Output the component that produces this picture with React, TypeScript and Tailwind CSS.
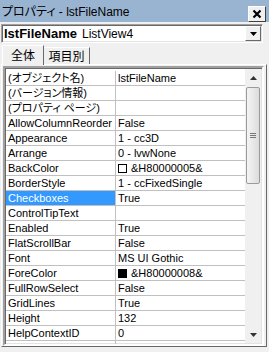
import React from "react";

type Row = { n: string; v: string; sw?: "w" | "b"; sel?: boolean };

const rows: Row[] = [
  { n: "(オブジェクト名)", v: "lstFileName" },
  { n: "(バージョン情報)", v: "" },
  { n: "(プロパティ ページ)", v: "" },
  { n: "AllowColumnReorder", v: "False" },
  { n: "Appearance", v: "1 - cc3D" },
  { n: "Arrange", v: "0 - lvwNone" },
  { n: "BackColor", v: "&H80000005&", sw: "w" },
  { n: "BorderStyle", v: "1 - ccFixedSingle" },
  { n: "Checkboxes", v: "True", sel: true },
  { n: "ControlTipText", v: "" },
  { n: "Enabled", v: "True" },
  { n: "FlatScrollBar", v: "False" },
  { n: "Font", v: "MS UI Gothic" },
  { n: "ForeColor", v: "&H80000008&", sw: "b" },
  { n: "FullRowSelect", v: "False" },
  { n: "GridLines", v: "True" },
  { n: "Height", v: "132" },
  { n: "HelpContextID", v: "0" },
  { n: "HideColumnHeaders", v: "False" },
];

export default function App() {
  return (
    <div className="w-[269px] h-[352px] bg-[#f0f0f0] overflow-hidden text-black text-[11px] leading-none font-['Liberation_Sans','Noto_Sans_CJK_JP',sans-serif] [font-feature-settings:'palt']">
      {/* title bar */}
      <div className="h-[22px] bg-[#99b4d1] flex items-center pl-[2px]">
        <span className="text-[12px] mt-[1px]">プロパティ - lstFileName</span>
        <div className="ml-auto mr-[3px] mt-[6px] w-[18px] h-[16px] bg-[#f0f0f0] border border-t-white border-l-white border-r-[#404040] border-b-[#404040] flex items-center justify-center">
          <svg width="10" height="10" viewBox="0 0 10 10">
            <path d="M1.5 1.5L8.5 8.5M8.5 1.5L1.5 8.5" stroke="black" strokeWidth="2.2" />
          </svg>
        </div>
      </div>

      {/* combo */}
      <div className="mt-[2px] ml-[1px] w-[262px] h-[19px] bg-white border border-t-[#a0a0a0] border-l-[#a0a0a0] border-r-white border-b-white shadow-[inset_1px_1px_0_#696969,inset_-1px_-1px_0_#e3e3e3] flex items-center pl-[2px] pr-[1px]">
        <span className="text-[13px] font-bold">lstFileName</span>
        <span className="text-[12px] ml-[5px]">ListView4</span>
        <div className="ml-auto w-[16px] h-[15px] bg-[#f0f0f0] border border-t-white border-l-white border-r-[#696969] border-b-[#696969] flex items-center justify-center">
          <svg width="7" height="5" viewBox="0 0 7 5" className="mt-[2px]">
            <path d="M0 0H7L3.5 4Z" fill="black" />
          </svg>
        </div>
      </div>

      {/* tabs */}
      <div className="mt-[2px] h-[19px] flex items-start relative z-10">
        <div className="ml-[2px] w-[42px] h-[20px] bg-[#f0f0f0] border-t border-l border-t-white border-l-white border-r border-r-[#696969] flex items-start justify-center pt-[4px] text-[12px]">
          全体
        </div>
        <div className="mt-[2px] w-[46px] h-[17px] bg-[#f0f0f0] border-t border-t-white border-r border-r-[#696969] flex items-start justify-center pt-[3px] text-[12px]">
          項目別
        </div>
      </div>

      {/* tab page */}
      <div className="ml-[1px] w-[266px] h-[283px] border-t border-l border-b border-t-white border-l-white border-b-[#696969] border-r border-r-[#696969] pl-[1px] pt-[1px] pr-[2px]">
        <div className="h-[280px] border-2 border-t-[#a0a0a0] border-l-[#a0a0a0] border-r-white border-b-white shadow-[inset_1px_1px_0_#696969,inset_-1px_-1px_0_#e3e3e3] bg-white flex overflow-hidden">
          <div className="flex-1 pl-[1px] pt-[3px] overflow-hidden">
            {rows.map((r, i) => (
              <div key={i} className="h-[15px] flex border-b border-b-[#c0c0c0]">
                <div
                  className={
                    "w-[110px] shrink-0 border-r border-r-[#c0c0c0] pl-[2px] flex items-center whitespace-nowrap overflow-hidden " +
                    (r.sel ? "bg-[#3399ff] text-white" : "")
                  }
                >
                  {r.n}
                </div>
                <div className="flex-1 pl-[2px] flex items-center whitespace-nowrap overflow-hidden">
                  {r.sw === "w" && <span className="w-[9px] h-[9px] border border-black bg-white mr-[4px] shrink-0" />}
                  {r.sw === "b" && <span className="w-[9px] h-[9px] border border-black bg-black mr-[4px] shrink-0" />}
                  {r.v}
                </div>
              </div>
            ))}
          </div>
          {/* scrollbar */}
          <div className="w-[16px] shrink-0 bg-[#f0f0f0] flex flex-col mr-[1px] mt-[1px] mb-[1px]">
            <div className="h-[17px] flex items-center justify-center">
              <svg width="7" height="4" viewBox="0 0 7 4">
                <path d="M3.5 0L7 4H0Z" fill="#333" />
              </svg>
            </div>
            <div className="mt-[1px] mx-[1px] h-[97px] rounded-[2px] border border-[#9a9a9a] bg-gradient-to-r from-[#f4f4f4] to-[#dcdcdc] flex items-center justify-center">
              <div className="flex flex-col gap-[1px]">
                <div className="w-[6px] h-px bg-[#777]" />
                <div className="w-[6px] h-px bg-[#777]" />
                <div className="w-[6px] h-px bg-[#777]" />
              </div>
            </div>
            <div className="flex-1" />
            <div className="h-[17px] flex items-center justify-center">
              <svg width="7" height="4" viewBox="0 0 7 4">
                <path d="M0 0H7L3.5 4Z" fill="#333" />
              </svg>
            </div>
          </div>
        </div>
      </div>
    </div>
  );
}
